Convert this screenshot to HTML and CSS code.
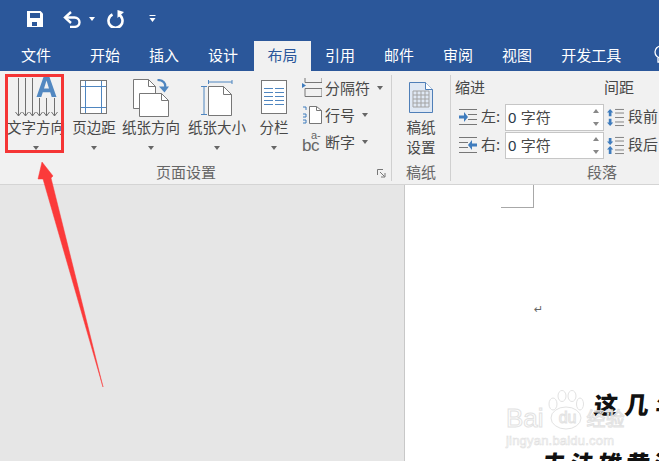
FILE: index.html
```html
<!DOCTYPE html>
<html lang="zh">
<head>
<meta charset="utf-8">
<title>布局</title>
<link rel="stylesheet" href="styles.css">
</head>
<body>
<div class="app">
  <header class="head">
    <div class="qat">
      <svg class="q-save" width="16" height="16" viewBox="0 0 16 16"><path d="M0 0h13.500L16 2.500V16H0z" fill="#fff"/><rect x="3" y="2" width="10" height="5" fill="#2b579a"/><rect x="5" y="11" width="5" height="4" fill="#2b579a"/></svg>
      <svg class="q-undo" width="18" height="17" viewBox="0 0 18 17"><path d="M2 6.500h9.500a5 4.700 0 0 1 0 9.400H7" fill="none" stroke="#fff" stroke-width="2.400"/><path d="M8 1 2 6.500 8 12" fill="none" stroke="#fff" stroke-width="2.400"/></svg>
      <span class="q-caret"></span>
      <svg class="q-redo" width="18" height="18" viewBox="0 0 18 18"><path d="M5.500 4.500a7 7 0 1 0 6 0" fill="none" stroke="#fff" stroke-width="2.600"/><path d="M10.500 0v8L17 2z" fill="#fff"/></svg>
      <svg class="q-more" width="7" height="8" viewBox="0 0 7 8"><rect x="0.500" y="0" width="6" height="1" fill="#fff"/><path d="M0.500 3h6L3.500 7z" fill="#fff"/></svg>
    </div>
    <nav class="tabs">
      <span class="tab t-file">文件</span>
      <span class="tab t-a">开始</span>
      <span class="tab t-b">插入</span>
      <span class="tab t-c">设计</span>
      <span class="tab active">布局</span>
      <span class="tab t-d">引用</span>
      <span class="tab t-e">邮件</span>
      <span class="tab t-f">审阅</span>
      <span class="tab t-g">视图</span>
      <span class="tab t-h">开发工具</span>
      <svg class="bulb" width="10" height="20" viewBox="0 0 10 20"><circle cx="9" cy="7" r="6" fill="none" stroke="#fff" stroke-width="1.300"/><path d="M6 13v4h4" fill="none" stroke="#fff" stroke-width="1.300"/></svg>
    </nav>
  </header>

  <section class="ribbon">
    <div class="group g-page">
      <div class="g-body">
        <div class="big w-dir">
          <svg width="46" height="40" viewBox="0 0 46 40"><g stroke="#707070" fill="none"><path d="M5.500 1v38M12.500 1v38M19.500 1v38M26.500 21v18M33.500 21v18M41.500 21v18"/><path d="M2.500 35l3 4 3-4M9.500 35l3 4 3-4M16.500 35l3 4 3-4M23.500 35l3 4 3-4M30.500 35l3 4 3-4M38.500 35l3 4 3-4"/></g><path d="M30.500 0h6L43.500 20h-4.800l-1.500-4.800h-7.400L28.300 20H23.500zM31 11.500h5L33.500 3.500z" fill="#5288c1" fill-rule="evenodd"/></svg>
          <span class="lbl">文字方向</span><i class="caret"></i>
        </div>
        <div class="big w-margin">
          <svg width="28" height="34" viewBox="0 0 28 34"><rect x="0.500" y="0.500" width="26" height="33" fill="#fff"/><path d="M5.500 1v32M21.500 1v32M1 6.500h25M1 27.500h25" stroke="#4f86c0" fill="none"/><rect x="0.500" y="0.500" width="26" height="33" fill="none" stroke="#777"/></svg>
          <span class="lbl">页边距</span><i class="caret"></i>
        </div>
        <div class="big w-ori">
          <svg width="36" height="38" viewBox="0 0 36 38"><path d="M0.500 0.500h15l7 7v22h-22z" fill="#fff" stroke="#777"/><path d="M15.500 0.500v7h7" fill="none" stroke="#777"/><path d="M6.500 14.500h22l7 7v16h-29z" fill="#fff" stroke="#777"/><path d="M28.500 14.500v7h7" fill="none" stroke="#777"/><path d="M24.500 1c6 0 8.500 3.500 7.500 8" fill="none" stroke="#4f86c0" stroke-width="2.200"/><path d="M26 7.500l5.500 6 4.500-6z" fill="#4f86c0"/></svg>
          <span class="lbl">纸张方向</span><i class="caret"></i>
        </div>
        <div class="big w-size">
          <svg width="32" height="37" viewBox="0 0 32 37"><path d="M7.500 1v4M31 1v4M7.500 3H31" stroke="#4f86c0" fill="none"/><path d="M7.500 7.500h15l8 8v21h-23z" fill="#fff" stroke="#777"/><path d="M22.500 7.500v8h8" fill="none" stroke="#777"/><path d="M0 7.500h6M0 35.500h6M3 7.500v28" stroke="#4f86c0" fill="none"/></svg>
          <span class="lbl">纸张大小</span><i class="caret"></i>
        </div>
        <div class="big w-col">
          <svg width="26" height="35" viewBox="0 0 26 35"><rect x="0.500" y="0.500" width="25" height="33" fill="#fff" stroke="#777"/><path d="M3 8.500h9M14 8.500h9M3 12.500h9M14 12.500h9M3 16.500h9M14 16.500h9M3 20.500h9M14 20.500h9M3 24.500h9M14 24.500h9" stroke="#4f86c0"/></svg>
          <span class="lbl">分栏</span><i class="caret"></i>
        </div>
        <div class="small-col">
          <div class="small">
            <svg width="20" height="19" viewBox="0 0 20 19"><path d="M3 4.500h17M3 4.500V0M20 4.500V0M3 10.500h17v8H3z" fill="none" stroke="#777"/><path d="M0 5l4 2.500L0 10z" fill="#3f7cbd"/></svg>
            <span>分隔符</span><i class="caret"></i>
          </div>
          <div class="small">
            <svg width="20" height="19" viewBox="0 0 20 19"><path d="M7.500 1.500h7l5 4v13h-12z" fill="#fff" stroke="#777"/><path d="M14.500 1.500v4h5" fill="none" stroke="#777"/><path d="M1 2h3v3M1 9h3v3H1M1 15h3v3H1" fill="none" stroke="#3f7cbd"/></svg>
            <span>行号</span><i class="caret"></i>
          </div>
          <div class="small">
            <span class="bc"><b class="bc-a">a-</b><b class="bc-b">bc</b></span>
            <span>断字</span><i class="caret"></i>
          </div>
        </div>
      </div>
      <div class="g-name">页面设置<svg class="launcher" width="9" height="9" viewBox="0 0 9 9"><path d="M0.500 6V0.500H6M3 3l4.500 4.500M8 4v4H4" fill="none" stroke="#777"/></svg></div>
    </div>

    <div class="group g-paper">
      <div class="g-body">
        <div class="big w-paper">
          <svg width="24" height="31" viewBox="0 0 24 31"><path d="M0.500 0.500h16l7 7v23h-23z" fill="#dfe8f4" stroke="#4f7fb8"/><path d="M16.500 0.500v7h7" fill="#fff" stroke="#4f7fb8"/><path d="M4 9h16v16H4zM4 13h16M4 17h16M4 21h16M8 9v16M12 9v16M16 9v16" fill="none" stroke="#a3a3a3"/></svg>
          <span class="lbl two">稿纸<br>设置</span>
        </div>
      </div>
      <div class="g-name">稿纸</div>
    </div>

    <div class="group g-para">
      <div class="g-body para-grid">
        <div class="para-col">
          <div class="para-head">缩进</div>
          <div class="para-row">
            <svg width="18" height="16" viewBox="0 0 18 16"><path d="M0 0.500h18M9 5.500h9M9 10.500h9M0 15.500h18" stroke="#777"/><path d="M0 6.500h5V3l4 5-4 5V9.500H0z" fill="#3f7cbd"/></svg>
            <span class="pl">左:</span><div class="spin"><span class="val"><em>0</em> 字符</span><span class="arrows"><i></i><i></i></span></div>
          </div>
          <div class="para-row">
            <svg width="18" height="16" viewBox="0 0 18 16"><path d="M0 0.500h18M0 5.500h9M0 10.500h9M0 15.500h18" stroke="#777"/><path d="M18 6.500h-5V3L9 8l4 5V9.500h5z" fill="#3f7cbd"/></svg>
            <span class="pl">右:</span><div class="spin"><span class="val"><em>0</em> 字符</span><span class="arrows"><i></i><i></i></span></div>
          </div>
        </div>
        <div class="para-col sp">
          <div class="para-head">间距</div>
          <div class="para-row">
            <svg width="19" height="19" viewBox="0 0 19 19"><path d="M9 0.500h10M9 4.500h10M9 9.500h10M9 14.500h10M9 18.500h10" stroke="#777"/><path d="M3.500 0L7 4H5v4H2V4H0zM3.500 19L7 15H5v-4H2v4H0z" fill="#3f7cbd"/></svg>
            <span class="pl">段前</span>
          </div>
          <div class="para-row">
            <svg width="19" height="19" viewBox="0 0 19 19"><path d="M9 0.500h10M9 4.500h10M9 9.500h10M9 14.500h10M9 18.500h10" stroke="#777"/><path d="M3.500 9L7 5H5V1H2v4H0zM3.500 10L7 14H5v5H2v-5H0z" fill="#3f7cbd"/></svg>
            <span class="pl">段后</span>
          </div>
        </div>
      </div>
      <div class="g-name">段落</div>
    </div>
  </section>

  <main class="work">
    <div class="side"></div>
    <div class="paper">
      <div class="crop"></div>
      <div class="para-mark">↵</div>
      <div class="poem">
        <p class="l1">这几年</p>
        <p class="l2">去法雄黄酒</p>
      </div>
    </div>
  </main>

  <div class="redbox"></div>
  <svg class="arrow" width="70" height="230" viewBox="0 0 70 230"><path d="M5 2L1 19l5 0L66 227 14 18l2-2z" fill="#fb3a3a" stroke="#fb3a3a" stroke-width="0.500" stroke-linejoin="round"/></svg>
  <div class="wm">
    <svg class="wm-paw" width="36" height="40" viewBox="0 0 36 40"><g fill="none" stroke="#e2e2e2"><ellipse cx="18" cy="28" rx="15" ry="11"/><ellipse cx="5" cy="14" rx="4" ry="6"/><ellipse cx="14" cy="6" rx="4" ry="5.500"/><ellipse cx="24" cy="6" rx="4" ry="5.500"/><ellipse cx="32" cy="14" rx="3.500" ry="6"/></g></svg>
    <span class="wm-a"><span>Bai</span><b>du</b><span class="wm-cn">经验</span></span>
    <span class="wm-b">jingyan.baidu.com</span>
  </div>
</div>
</body>
</html>
```
FILE: styles.css
```css
* { box-sizing: border-box; }
html, body { margin: 0; padding: 0; }
body { width: 659px; height: 461px; overflow: hidden; background: #e6e6e6; font-family: "Noto Sans CJK SC", "Noto Sans", sans-serif; }
.app { position: relative; width: 659px; height: 461px; overflow: hidden; display: flex; flex-direction: column; }

.head { background: #2b579a; height: 71px; flex: none; display: flex; flex-direction: column; }
.qat { height: 41px; display: flex; align-items: center; padding: 0 0 3px 27px; }
.q-save { margin-right: 20px; }
.q-undo { margin-right: 8px; }
.q-caret { width: 0; height: 0; border: 3.500px solid transparent; border-top: 4px solid #fff; border-bottom: 0; margin-right: 12px; }
.q-redo { margin-right: 24px; }
.tabs { height: 30px; display: flex; align-items: stretch; color: #fff; font-size: 15px; line-height: 28px; overflow: hidden; position: relative; }
.tab { flex: none; height: 30px; }
.t-file { margin-left: 21px; margin-right: 39px; }
.t-a { margin-right: 29px; }
.t-b { margin-right: 29px; }
.t-c { margin-right: 16px; }
.tab.active { background: #f1f1f1; color: #2b579a; width: 57px; text-align: center; margin-right: 14px; }
.t-d { margin-right: 29px; }
.t-e { margin-right: 29px; }
.t-f { margin-right: 29px; }
.t-g { margin-right: 29px; }
.t-h { margin-right: 31px; }
.bulb { flex: none; margin-top: 4px; }

.ribbon { height: 114px; flex: none; background: #f1f1f1; border-bottom: 1px solid #d4d4d4; display: flex; color: #484848; font-size: 14.500px; }
.group { display: flex; flex-direction: column; border-right: 1px solid #d0d0d0; margin: 4px 0 3px; position: relative; flex: none; }
.g-page { width: 392px; }
.g-paper { width: 59px; }
.g-para { width: 208px; border-right: 0; }
.g-body { flex: 1; display: flex; min-height: 0; }
.g-name { height: 20px; line-height: 20px; padding-top: 1px; text-align: center; font-size: 15px; color: #666; }
.g-page .g-name { padding-right: 19px; }
.g-para .g-name { padding-left: 94px; }
.launcher { position: absolute; right: 5px; bottom: 3px; }
.big { flex: none; display: flex; flex-direction: column; align-items: center; }
.big svg { flex: none; }
.lbl { line-height: 20px; white-space: nowrap; }
.caret { display: block; width: 0; height: 0; border: 3.500px solid transparent; border-top: 4px solid #666; border-bottom: 0; }
.big .caret { margin-top: 9px; }
.w-dir { width: 56px; padding-top: 2px; margin-left: 8px; }
.w-margin { width: 46px; margin-left: 7px; padding-top: 5px; }
.w-margin .lbl { margin-top: 3px; }
.w-ori { width: 60px; margin-left: 4px; padding-top: 4px; }
.w-size { width: 60px; margin-left: 6px; padding-top: 4px; }
.w-size .lbl { margin-top: 1px; }
.w-col { width: 36px; margin-left: 9px; padding-top: 5px; }
.w-col .lbl { margin-top: 2px; }
.small-col { display: flex; flex-direction: column; margin-left: 10px; margin-top: -1px; }
.small { display: flex; align-items: center; height: 27px; gap: 3px; white-space: nowrap; font-size: 15px; }
.small .caret { margin-left: 4px; }
.bc { position: relative; width: 20px; height: 22px; display: block; font-family: "Liberation Sans", sans-serif; color: #666; }
.bc b { position: absolute; font-weight: 400; line-height: 14px; }
.bc-a { left: 9px; top: -3px; font-size: 11px; }
.bc-b { left: 0; top: 8px; font-size: 17px; letter-spacing: -0.500px; }
.w-paper { width: 58px; padding-top: 7px; }
.w-paper .lbl.two { margin-top: 4px; line-height: 20px; text-align: center; display: block; }

.para-grid { padding-left: 4px; }
.para-col { width: 149px; flex: none; }
.para-col.sp { width: 54px; }
.para-head { height: 24px; line-height: 24px; margin-bottom: 4px; font-size: 15px; }
.para-row { display: flex; align-items: center; height: 28px; font-size: 15px; }
.para-col:first-child .para-row { padding-left: 4px; }
.sp .para-row { padding-left: 3px; }
.pl { margin-left: 4px; margin-bottom: 3px; white-space: nowrap; }
.para-col:first-child .pl { width: 20px; }
.spin { width: 99px; height: 27px; margin-left: 4px; flex: none; background: #fff; border: 1px solid #c6c6c6; display: flex; align-items: center; padding: 0 4px 0 2px; justify-content: space-between; font-size: 15px; }
.val { word-spacing: 1px; margin-bottom: 2px; }
.val em { font-style: normal; color: #2a3a4a; font-family: "Liberation Sans", sans-serif; font-size: 15px; }
.arrows { display: flex; flex-direction: column; gap: 9px; }
.arrows i { display: block; width: 0; height: 0; border: 3px solid transparent; }
.arrows i:first-child { border-bottom: 4px solid #888; border-top: 0; }
.arrows i:last-child { border-top: 4px solid #888; border-bottom: 0; }

.work { flex: 1; display: flex; min-height: 0; }
.side { width: 405px; flex: none; background: #e6e6e6; border-right: 1px solid #c8c8c8; }
.paper { flex: 1; background: #fff; position: relative; overflow: hidden; }
.crop { position: absolute; left: 96px; top: 0; width: 33px; height: 23px; border-right: 1px solid #a8a8a8; border-bottom: 1px solid #a8a8a8; }
.para-mark { position: absolute; left: 129px; top: 117px; font: 11px/16px "DejaVu Sans", sans-serif; color: #666; }
.poem { position: absolute; left: 0; top: 0; width: 254px; height: 277px; overflow: hidden; font-weight: 900; color: #111; }
.poem p { margin: 0; font-size: 24px; line-height: 30px; white-space: nowrap; position: absolute; transform: skewX(-6deg); }
.l1 { left: 189px; top: 204px; letter-spacing: 7px; }
.l2 { left: 137px; top: 263px; letter-spacing: 4px; }

.redbox { position: absolute; left: 5px; top: 74px; width: 59px; height: 79px; border: 3px solid #f53535; }
.arrow { position: absolute; left: 37px; top: 160px; }
.wm { position: absolute; left: 506px; top: 390px; width: 120px; height: 58px; font-family: "Liberation Sans", "Noto Sans CJK SC", sans-serif; display: flex; flex-direction: column; justify-content: flex-end; }
.wm-paw { position: absolute; left: 42px; top: 0; }
.wm-a { display: flex; align-items: center; font-size: 26px; line-height: 24px; white-space: nowrap; color: transparent; -webkit-text-stroke: 1px #e2e2e2; position: relative; }
.wm-a b { font-weight: 400; font-size: 16px; width: 36px; margin-left: 6px; text-align: center; }
.wm-cn { font-size: 19px; font-family: "Noto Sans CJK SC", sans-serif; margin-left: 1px; }
.wm-b { font-size: 13px; line-height: 14px; margin-top: 4px; white-space: nowrap; color: transparent; -webkit-text-stroke: .6px #e0e0e0; letter-spacing: .2px; position: relative; }
```
